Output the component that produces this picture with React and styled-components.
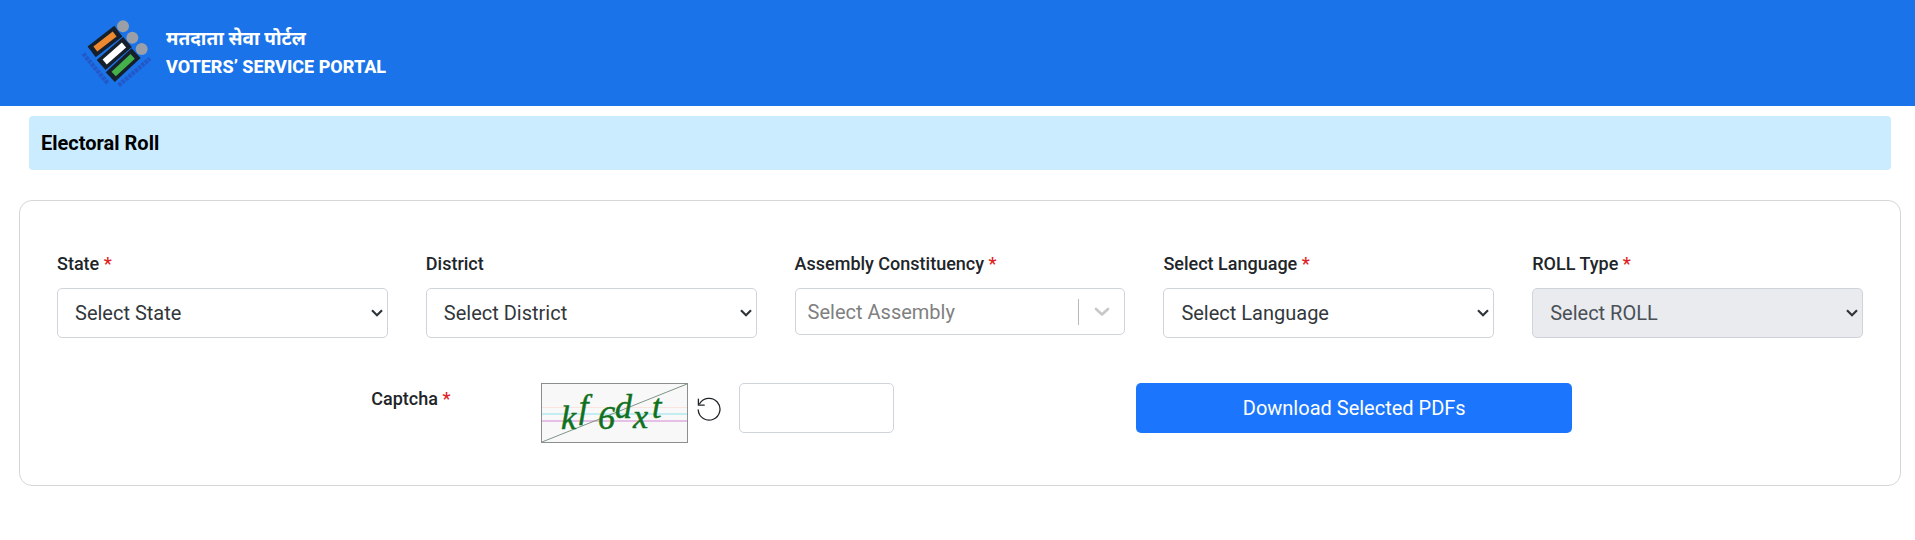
import React, { useState } from "react";
import styled, { createGlobalStyle } from "styled-components";

const GlobalStyle = createGlobalStyle`
  *, *::before, *::after { box-sizing: border-box; }
  body {
    margin: 0;
    background: #fff;
    color: #212529;
    font-family: Roboto, "Noto Sans", sans-serif;
    font-size: 20px;
    line-height: 24px;
  }
`;

const Header = styled.header`
  display: flex;
  align-items: center;
  gap: 11px;
  padding: 15px 80px 16px;
  background: #1a73e8;
  color: #fff;
`;

const Emblem = styled.svg`
  width: 75px;
  height: 75px;
  flex: none;
`;

const Brand = styled.div`
  display: flex;
  flex-direction: column;
  font-size: 18px;
  font-weight: 800;
  line-height: 28px;
`;

const HindiName = styled.span`
  font-size: 19px;
  font-weight: 700;
`;

const PageTitle = styled.h1`
  margin: 10px 24px 0 29px;
  padding: 15px 12px;
  border-radius: 4px;
  background: #cbecff;
  color: #000;
  font-size: 20px;
  font-weight: 700;
  line-height: 24px;
`;

const Card = styled.form`
  display: flex;
  flex-direction: column;
  gap: 45px;
  margin: 30px 14px 0 19px;
  padding: 51px 37px 42px;
  border: 1px solid #d6d6d6;
  border-radius: 13px;
`;

const FieldRow = styled.div`
  display: grid;
  grid-template-columns: repeat(5, minmax(0, 1fr));
  gap: 38px;
`;

const Field = styled.div`
  display: flex;
  flex-direction: column;
  gap: 12px;
`;

const Label = styled.label`
  font-size: 18px;
  font-weight: 500;
  line-height: 24px;
`;

const Required = styled.span`
  color: #e02020;
`;

const SelectBox = styled.div`
  display: grid;
  grid-template-columns: minmax(0, 1fr) auto;
  align-items: center;
`;

const Select = styled.select`
  grid-area: 1 / 1 / 2 / 3;
  width: 100%;
  height: ${(p) => (p.$searchable ? 47 : 50)}px;
  padding: 0 ${(p) => (p.$searchable ? 12 : 17)}px;
  border: 1px solid #ced4da;
  border-radius: 5px;
  background: ${(p) => (p.disabled ? "#e9ebee" : "#fff")};
  color: ${(p) => (p.$searchable ? "#808080" : p.disabled ? "#495057" : "#32373c")};
  font: inherit;
  opacity: 1;
  appearance: none;
`;

const Indicators = styled.div`
  grid-area: 1 / 2;
  display: flex;
  align-items: center;
  gap: 15px;
  padding-right: ${(p) => (p.$searchable ? 15 : 5)}px;
  pointer-events: none;
`;

const Separator = styled.span`
  width: 1px;
  height: 26px;
  background: #b8b8b8;
`;

const CaptchaRow = styled.div`
  display: grid;
  grid-template-columns: 169fr auto 242fr 435fr;
  padding: 0 16.1% 0 17.4%;
  align-items: start;
`;

const CaptchaLabel = styled(Label)`
  padding-top: 4px;
`;

const CaptchaGroup = styled.div`
  display: flex;
  align-items: flex-start;
`;

const CaptchaImage = styled.svg`
  width: 147px;
  height: 60px;
  border: 1px solid #8b8f8d;
  background: #f8f8f8;
  font-family: "Liberation Serif", serif;
  font-style: italic;
`;

const RefreshButton = styled.button`
  display: flex;
  padding: 14px 18px 0 9px;
  border: 0;
  background: none;
  color: #212529;
  cursor: pointer;
`;

const CaptchaInput = styled.input`
  width: 155px;
  height: 50px;
  padding: 0 12px;
  border: 1px solid #ced4da;
  border-radius: 5px;
  font: inherit;
`;

const DownloadButton = styled.button`
  grid-column: 4;
  height: 50px;
  border: 0;
  border-radius: 5px;
  background: #1b76fd;
  color: #fff;
  font: inherit;
  cursor: pointer;
`;

const bars = [
  { fill: "#ee8932", x1: 46, y1: 102, x2: 104, y2: 57 },
  { fill: "#ffffff", x1: 74, y1: 141, x2: 132, y2: 90 },
  { fill: "#45b14b", x1: 101, y1: 177, x2: 158, y2: 124 },
];

function PortalEmblem() {
  return (
    <Emblem viewBox="0 0 225 225" aria-hidden="true">
      <path d="M10 116 L84 206 M116 211 L210 131" stroke="#2458c9" strokeWidth="13" strokeDasharray="10 3" fill="none" />
      {bars.map((b) => {
        const dx = b.x2 - b.x1;
        const dy = b.y2 - b.y1;
        const k = 14 / Math.hypot(dx, dy);
        return (
          <g key={b.fill}>
            <line x1={b.x1 - dx * k} y1={b.y1 - dy * k} x2={b.x2 + dx * k} y2={b.y2 + dy * k} stroke="#15202c" strokeWidth="40" />
            <line x1={b.x1} y1={b.y1} x2={b.x2} y2={b.y2} stroke={b.fill} strokeWidth="19" />
          </g>
        );
      })}
      <g fill="#9a9fa8">
        <circle cx="129" cy="34" r="18" />
        <circle cx="157" cy="68" r="18" />
        <circle cx="185" cy="102" r="18" />
      </g>
    </Emblem>
  );
}

function Chevron({ light }) {
  return light ? (
    <svg width="16" height="10" viewBox="0 0 16 10" fill="none" stroke="#c8c8c8" strokeWidth="2.6" strokeLinecap="round" strokeLinejoin="round">
      <path d="M2 2 L8 7.5 L14 2" />
    </svg>
  ) : (
    <svg width="12" height="8" viewBox="0 0 12 8" fill="none" stroke="#30353a" strokeWidth="2.2">
      <path d="M1 1.2 L6 6.2 L11 1.2" />
    </svg>
  );
}

function SelectField({ id, label, placeholder, required, searchable, disabled }) {
  return (
    <Field>
      <Label htmlFor={id}>
        {label} {required && <Required>*</Required>}
      </Label>
      <SelectBox>
        <Select id={id} disabled={disabled} $searchable={searchable}>
          <option>{placeholder}</option>
        </Select>
        <Indicators $searchable={searchable}>
          {searchable && <Separator />}
          <Chevron light={searchable} />
        </Indicators>
      </SelectBox>
    </Field>
  );
}

const captchaGlyphs = [
  { ch: "k", x: 19, y: 45 },
  { ch: "f", x: 37, y: 34 },
  { ch: "6", x: 56, y: 45 },
  { ch: "d", x: 73, y: 34 },
  { ch: "x", x: 91, y: 44 },
  { ch: "t", x: 110, y: 34 },
];

function Captcha() {
  return (
    <CaptchaImage viewBox="0 0 145 58" role="img" aria-label="Captcha">
      <path d="M0 23.5 H145" stroke="#fbe3e0" />
      <path d="M0 30 H145" stroke="#c4edf2" strokeWidth="2" />
      <path d="M0 37 H145" stroke="#e6bfe6" strokeWidth="2" />
      <path d="M0 58 L145 0" stroke="#7f9483" />
      <g fill="#0f701e" stroke="#0f701e" strokeWidth="0.5" fontSize="34">
        {captchaGlyphs.map((g) => (
          <text key={g.ch} x={g.x} y={g.y}>{g.ch}</text>
        ))}
      </g>
    </CaptchaImage>
  );
}

export default function App() {
  const [code, setCode] = useState("");
  return (
    <>
      <GlobalStyle />
      <Header>
        <PortalEmblem />
        <Brand>
          <HindiName lang="hi">मतदाता सेवा पोर्टल</HindiName>
          <span>VOTERS’ SERVICE PORTAL</span>
        </Brand>
      </Header>
      <main>
        <PageTitle>Electoral Roll</PageTitle>
        <Card onSubmit={(e) => e.preventDefault()}>
          <FieldRow>
            <SelectField id="state" label="State" placeholder="Select State" required />
            <SelectField id="district" label="District" placeholder="Select District" />
            <SelectField id="assembly" label="Assembly Constituency" placeholder="Select Assembly" required searchable />
            <SelectField id="language" label="Select Language" placeholder="Select Language" required />
            <SelectField id="roll" label="ROLL Type" placeholder="Select ROLL" required disabled />
          </FieldRow>
          <CaptchaRow>
            <CaptchaLabel htmlFor="captcha">
              Captcha <Required>*</Required>
            </CaptchaLabel>
            <CaptchaGroup>
              <Captcha />
              <RefreshButton type="button" aria-label="Refresh captcha">
                <svg width="24" height="24" viewBox="0 0 24 24" fill="none" stroke="currentColor" strokeWidth="1.3" strokeLinecap="round" strokeLinejoin="round">
                  <path d="M1.2 13 A10.9 10.9 0 1 0 2.6 6.8" />
                  <path d="M1.4 2.2 V8.2 H7.2" />
                </svg>
              </RefreshButton>
              <CaptchaInput id="captcha" value={code} onChange={(e) => setCode(e.target.value)} />
            </CaptchaGroup>
            <DownloadButton type="submit">Download Selected PDFs</DownloadButton>
          </CaptchaRow>
        </Card>
      </main>
    </>
  );
}
